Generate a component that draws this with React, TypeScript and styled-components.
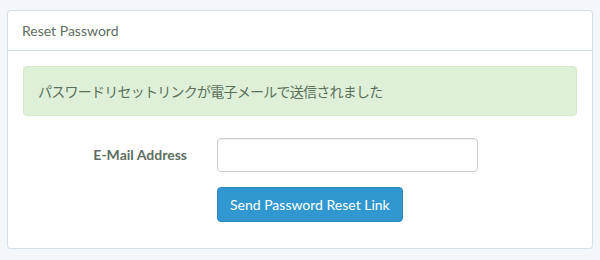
import React from "react";
import styled, { createGlobalStyle } from "styled-components";

const GlobalStyle = createGlobalStyle`
  html, body {
    margin: 0;
    padding: 0;
    background: #f5f8fa;
  }
  body {
    font-family: "Lato", "Noto Sans CJK JP", sans-serif;
    font-size: 14px;
    line-height: 1.6;
    color: #5f6b64;
  }
  * {
    box-sizing: border-box;
  }
`;

const Page = styled.div`
  padding: 10px 7px 0 7px;
`;

const Panel = styled.div`
  width: 586px;
  background: #fff;
  border: 1px solid #d3e0e9;
  border-radius: 4px;
  box-shadow: 0 1px 1px rgba(0, 0, 0, 0.05);
`;

const PanelHeading = styled.div`
  height: 40px;
  padding: 9px 14px;
  border-bottom: 1px solid #d3e0e9;
  font-size: 14px;
  line-height: 22px;
  color: #5f6d63;
`;

const PanelBody = styled.div`
  padding: 15px 15px 26px 15px;
`;

const Alert = styled.div`
  padding: 15px 14px;
  margin-bottom: 22px;
  background: #dff0d8;
  border: 1px solid #d6e9c6;
  border-radius: 4px;
  color: #5a7159;
  font-family: "Noto Sans CJK JP", sans-serif;
  font-size: 14px;
  line-height: 18px;
  letter-spacing: -0.75px;
`;

const FormGroup = styled.div<{ $last?: boolean }>`
  display: flex;
  align-items: center;
  margin-bottom: ${(p) => (p.$last ? "0" : "15px")};
`;

const LabelCol = styled.label`
  width: 194px;
  margin-left: -15px;
  padding: 0 15px;
  text-align: right;
  font-weight: 700;
  color: #5e6e63;
  font-size: 14px;
`;

const FieldCol = styled.div<{ $offset?: boolean }>`
  width: 291px;
  padding: 0 15px;
  margin-left: ${(p) => (p.$offset ? "179px" : "0")};
`;

const Input = styled.input`
  display: block;
  width: 100%;
  height: 34px;
  padding: 6px 12px;
  border: 1px solid #ccd0d2;
  border-radius: 4px;
  background: #fff;
  font-family: inherit;
  font-size: 14px;
  outline: none;
  box-shadow: inset 0 1px 1px rgba(0, 0, 0, 0.075);
`;

const Button = styled.button`
  display: inline-block;
  height: 35px;
  padding: 0 12px;
  background: #3097d1;
  border: 1px solid #2a88bd;
  border-radius: 4px;
  color: #fff;
  font-family: "Lato", sans-serif;
  font-size: 14px;
  line-height: 33px;
  cursor: pointer;
`;

export default function App() {
  return (
    <Page>
      <GlobalStyle />
      <Panel>
        <PanelHeading>Reset Password</PanelHeading>
        <PanelBody>
          <Alert>パスワードリセットリンクが電子メールで送信されました</Alert>
          <form onSubmit={(e) => e.preventDefault()}>
            <FormGroup>
              <LabelCol htmlFor="email">E-Mail Address</LabelCol>
              <FieldCol>
                <Input id="email" type="email" />
              </FieldCol>
            </FormGroup>
            <FormGroup $last>
              <FieldCol $offset>
                <Button type="submit">Send Password Reset Link</Button>
              </FieldCol>
            </FormGroup>
          </form>
        </PanelBody>
      </Panel>
    </Page>
  );
}
